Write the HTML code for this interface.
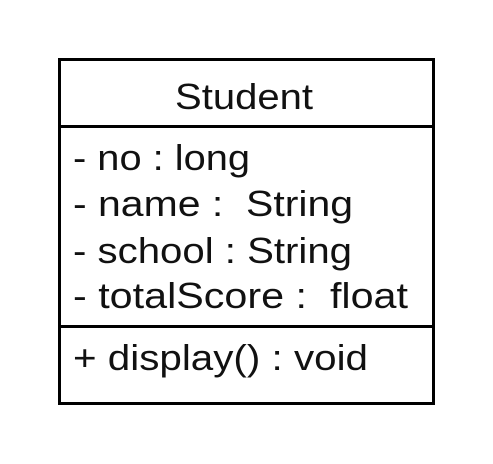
<!DOCTYPE html>
<html><head><style>html,body{margin:0;padding:0;background:#fff;width:493px;height:464px;overflow:hidden}</style></head>
<body>
<svg width="493" height="464" xmlns="http://www.w3.org/2000/svg" style="display:block">
<rect x="0" y="0" width="493" height="464" fill="#fff"/>
<rect x="59.5" y="59.5" width="374" height="344" fill="#fff" stroke="#000" stroke-width="3"/>
<line x1="59" y1="126.5" x2="434" y2="126.5" stroke="#000" stroke-width="3"/>
<line x1="59" y1="326.5" x2="434" y2="326.5" stroke="#000" stroke-width="3"/>
<g font-family="Liberation Sans, Arial, sans-serif" font-size="36" fill="#111" lengthAdjust="spacingAndGlyphs">
<text x="175" y="109" textLength="138" lengthAdjust="spacingAndGlyphs">Student</text>
<text x="73" y="170" textLength="177" lengthAdjust="spacingAndGlyphs">- no : long</text>
<text x="73" y="216" textLength="280" lengthAdjust="spacingAndGlyphs">- name :&#160;&#160;String</text>
<text x="73" y="263" textLength="279" lengthAdjust="spacingAndGlyphs">- school : String</text>
<text x="73" y="308" textLength="335" lengthAdjust="spacingAndGlyphs">- totalScore :&#160;&#160;float</text>
<text x="73" y="370" textLength="295" lengthAdjust="spacingAndGlyphs">+ display() : void</text>
</g>
</svg>
</body></html>
